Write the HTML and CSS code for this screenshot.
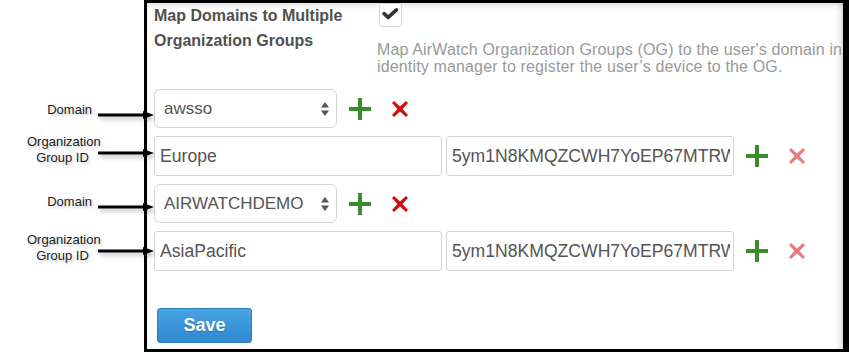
FILE: index.html
```html
<!DOCTYPE html>
<html lang="en">
<head>
  <meta charset="UTF-8">
  <title>Map Domains to Organization Groups</title>
  <link rel="stylesheet" href="styles.css">
</head>
<body>
  <div class="page">
    <!-- Callouts pointing at the rows -->
    <aside class="callouts">
      <div class="callout callout--domain callout--first">
        <span class="callout-label">Domain</span>
        <svg class="callout-arrow" viewBox="0 0 56 8"><use href="#arrow" /></svg>
      </div>
      <div class="callout callout--group">
        <span class="callout-label">Organization<br>Group ID</span>
        <svg class="callout-arrow" viewBox="0 0 56 8"><use href="#arrow" /></svg>
      </div>
      <div class="callout callout--domain callout--second">
        <span class="callout-label">Domain</span>
        <svg class="callout-arrow" viewBox="0 0 56 8"><use href="#arrow" /></svg>
      </div>
      <div class="callout callout--group callout--last">
        <span class="callout-label">Organization<br>Group ID</span>
        <svg class="callout-arrow" viewBox="0 0 56 8"><use href="#arrow" /></svg>
      </div>
    </aside>

    <!-- Settings panel -->
    <main class="panel">
      <div class="panel-head">
        <h1 class="panel-title">Map Domains to Multiple<br>Organization Groups</h1>
        <div class="panel-setting">
          <span class="checkbox">
            <svg viewBox="0 0 23 24"><use href="#check" /></svg>
          </span>
          <p class="panel-help">
            <span>Map AirWatch Organization Groups (OG) to the user's domain in</span>
            <span>identity manager to register the user’s device to the OG.</span>
          </p>
        </div>
      </div>

      <div class="mapping">
        <div class="row">
          <div class="select">
            <span class="select-value">awsso</span>
            <svg class="select-arrows" viewBox="0 0 8 14"><use href="#updown" /></svg>
          </div>
          <svg class="icon icon-add" viewBox="0 0 22 22"><use href="#plus" /></svg>
          <svg class="icon icon-remove" viewBox="0 0 18 18"><use href="#cross" /></svg>
        </div>
        <div class="row">
          <input class="field" type="text" value="Europe">
          <input class="field" type="text" value="5ym1N8KMQZCWH7YoEP67MTRW">
          <svg class="icon icon-add icon-add--group" viewBox="0 0 22 22"><use href="#plus" /></svg>
          <svg class="icon icon-remove icon-remove--soft" viewBox="0 0 18 18"><use href="#cross" /></svg>
        </div>
        <div class="row">
          <div class="select">
            <span class="select-value">AIRWATCHDEMO</span>
            <svg class="select-arrows" viewBox="0 0 8 14"><use href="#updown" /></svg>
          </div>
          <svg class="icon icon-add" viewBox="0 0 22 22"><use href="#plus" /></svg>
          <svg class="icon icon-remove" viewBox="0 0 18 18"><use href="#cross" /></svg>
        </div>
        <div class="row">
          <input class="field" type="text" value="AsiaPacific">
          <input class="field" type="text" value="5ym1N8KMQZCWH7YoEP67MTRW">
          <svg class="icon icon-add icon-add--group" viewBox="0 0 22 22"><use href="#plus" /></svg>
          <svg class="icon icon-remove icon-remove--soft" viewBox="0 0 18 18"><use href="#cross" /></svg>
        </div>
      </div>

      <button class="save" type="button">Save</button>
    </main>
  </div>

  <!-- SVG -->
  <svg class="sprite" xmlns="http://www.w3.org/2000/svg">
    <symbol id="arrow" viewBox="0 0 56 8">
      <line x1="0" y1="4" x2="48" y2="4" stroke="#000" stroke-width="3"/>
      <polygon points="45,0 56,4 45,8" fill="#000"/>
    </symbol>
    <symbol id="check" viewBox="0 0 23 24">
      <polyline points="4.5,10.5 9,14.5 18,6.5" fill="none" stroke="#333" stroke-width="4" stroke-linecap="round" stroke-linejoin="round"/>
    </symbol>
    <symbol id="updown" viewBox="0 0 8 14">
      <polygon points="4,0 8,5.5 0,5.5" fill="#555"/>
      <polygon points="0,8.5 8,8.5 4,14" fill="#555"/>
    </symbol>
    <symbol id="plus" viewBox="0 0 22 22">
      <rect x="0" y="9" width="22" height="4"/>
      <rect x="9" y="0" width="4" height="22"/>
    </symbol>
    <symbol id="cross" viewBox="0 0 18 18">
      <path d="M3,1 L9,6.5 L15,1 L17,3 L11.5,9 L17,15 L15,17 L9,11.5 L3,17 L1,15 L6.5,9 L1,3 Z"/>
    </symbol>
  </svg>
</body>
</html>
```

FILE: styles.css
```css
*, *:before,
*:after {
  box-sizing: border-box;
}

body {
  margin: 0;
  background: #ffffff;
  font-family: 'Liberation Sans', Arial, sans-serif;
}

.sprite {
  display: none;
}

.page {
  display: flex;
  width: 849px;
  height: 352px;
}

/* Callouts */
.callouts {
  flex: none;
  width: 144px;
  padding-top: 102px;
  display: flex;
  flex-direction: column;
  position: relative;
  z-index: 2;
}

.callout {
  display: flex;
  align-items: flex-start;
  height: 32px;
}

.callout--second {
  margin-top: 28px;
}

.callout--last {
  margin-top: 6px;
}

.callout-label {
  flex: none;
  width: 98px;
  font-size: 13px;
  line-height: 16px;
  color: #1a1a1a;
  text-shadow: 2px 2px 3px rgba(0, 0, 0, 0.2);
}

.callout--domain .callout-label {
  text-align: right;
  padding-right: 6px;
}

.callout--group .callout-label {
  text-align: center;
  padding-left: 27px;
}

.callout-arrow {
  flex: none;
  width: 56px;
  height: 8px;
  filter: drop-shadow(2px 3px 2px rgba(0, 0, 0, 0.25));
}

.callout--domain .callout-arrow {
  margin-top: 9px;
}

.callout--group .callout-arrow {
  margin-top: 15px;
}

/* Panel */
.panel {
  flex: none;
  width: 705px;
  height: 352px;
  border: 3px solid #000;
  border-right-width: 6px;
  padding-left: 7px;
  display: flex;
  flex-direction: column;
  align-items: flex-start;
  box-shadow: inset -7px 0 6px -5px rgba(0, 0, 0, 0.18), inset 0 7px 6px -5px rgba(0, 0, 0, 0.14);
  overflow: hidden;
}

.panel-head {
  display: flex;
}

.panel-title {
  width: 223px;
  margin: 0;
  font-size: 16px;
  font-weight: bold;
  line-height: 25px;
  color: #505050;
}

.panel-setting {
  display: flex;
  flex-direction: column;
  align-items: flex-start;
}

.checkbox {
  display: block;
  width: 23px;
  height: 24px;
  margin-left: 2px;
  border: 1px solid #d6d6d6;
  border-radius: 3px;
  background: #fff;
}

.checkbox svg {
  display: block;
  width: 21px;
  height: 22px;
}

.panel-help {
  margin: 14px 0 0;
  font-size: 16px;
  line-height: 17px;
  letter-spacing: 0.15px;
  color: #999;
  white-space: nowrap;
}

.panel-help span {
  display: block;
}

.mapping {
  margin-top: 14px;
  display: flex;
  flex-direction: column;
  gap: 8px;
}

.row {
  display: flex;
  align-items: center;
}

.select {
  width: 183px;
  height: 39px;
  border: 1px solid #d4d4d4;
  border-radius: 6px;
  padding: 0 7px 0 9px;
  display: flex;
  align-items: center;
  justify-content: space-between;
  font-size: 17px;
  color: #555;
}

.select-arrows {
  width: 8px;
  height: 14px;
}

.field {
  width: 288px;
  height: 40px;
  margin: 0;
  margin-right: 4px;
  padding: 0 3px 0 5px;
  border: 1px solid #d4d4d4;
  border-radius: 3px;
  font-family: 'Liberation Sans', Arial, sans-serif;
  font-size: 17.6px;
  color: #555;
  background: #fff;
  outline: 0;
}

.field + .field {
  margin-right: 0;
}

.icon {
  flex: none;
}

.icon-add {
  width: 22px;
  height: 22px;
  margin-left: 12px;
  fill: #3b8c2d;
}

.icon-add--group {
  margin-left: 12px;
}

.icon-remove {
  width: 18px;
  height: 18px;
  margin-left: 20px;
  fill: #d10a0a;
}

.icon-remove--soft {
  fill: #e87d7d;
}

.save {
  margin: 37px 0 0 3px;
  width: 95px;
  height: 35px;
  border: 1px solid #2b7fc4;
  border-radius: 3px;
  background: linear-gradient(#48a4e2, #2f88d0);
  color: #fff;
  font-family: 'Liberation Sans', Arial, sans-serif;
  font-size: 18px;
  font-weight: bold;
  text-shadow: 0 1px 1px rgba(0, 0, 0, 0.25);
  cursor: pointer;
}
```
